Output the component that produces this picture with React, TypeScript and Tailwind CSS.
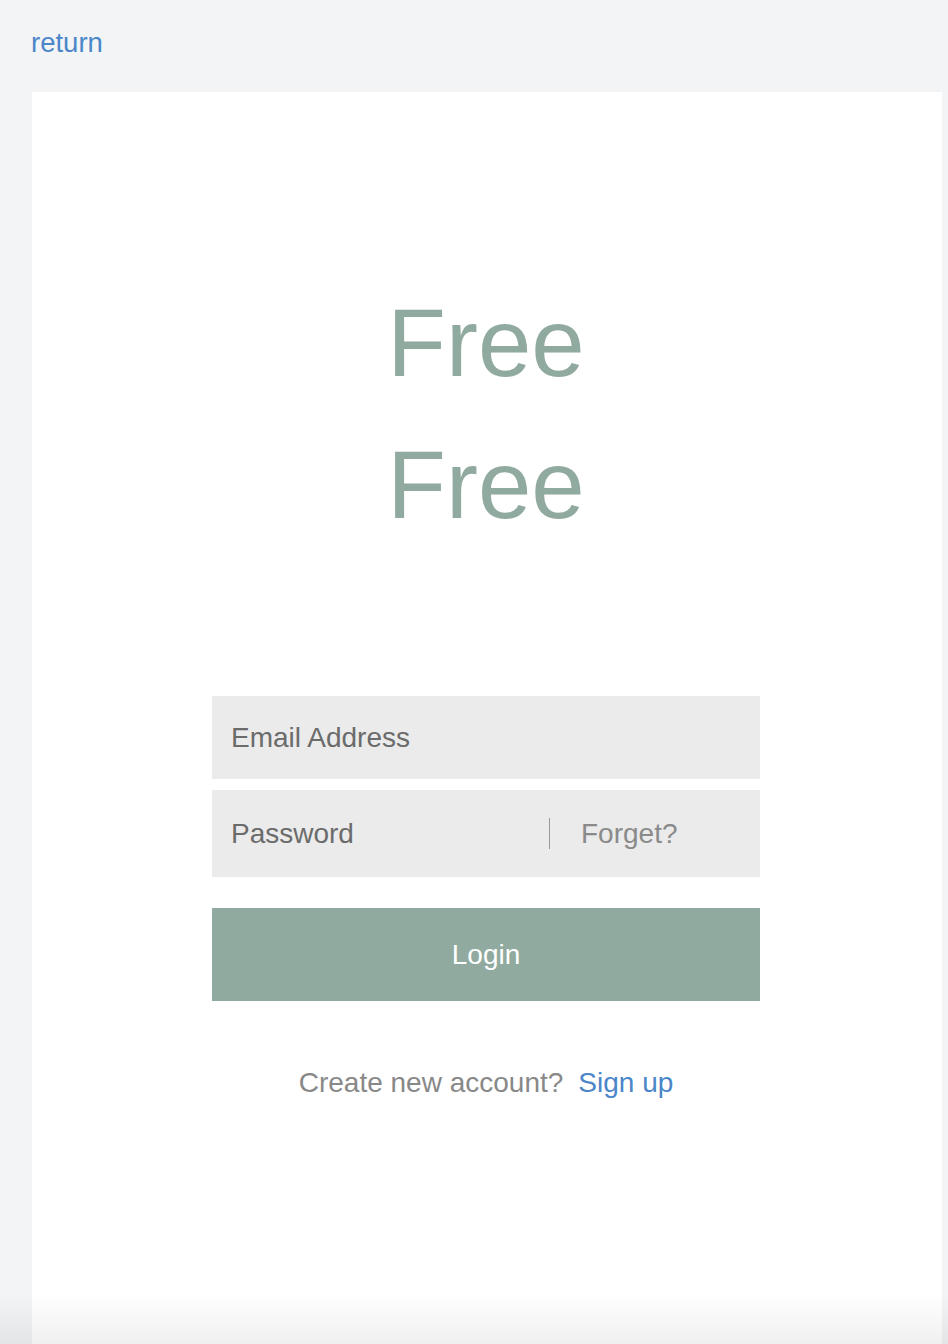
export default function App() {
  return (
    <div className="min-h-screen bg-[#f3f4f6] font-['Liberation_Sans',Arial,sans-serif] overflow-hidden">
      {/* Top bar */}
      <div className="h-[92px] pl-[31px] pt-[28px]">
        <a href="#" className="text-[27.5px] leading-[30px] text-[#4a86c8]">
          return
        </a>
      </div>

      {/* Card */}
      <div className="ml-[32px] mr-[6px] bg-white min-h-[1300px] pt-[180px] pr-[2px]">
        <h1 className="text-center text-[96px] leading-[142px] text-[#90aa9f] font-normal">
          Free
          <br />
          Free
        </h1>

        <form className="w-[548px] mx-auto mt-[140px] flex flex-col">
          <div className="h-[83px] bg-[#ebebeb] flex items-center pl-[19px]">
            <input
              type="email"
              placeholder="Email Address"
              className="w-full bg-transparent outline-none text-[28px] text-[#6b6b6b] placeholder:text-[#6b6b6b]"
            />
          </div>
          <div className="h-[87px] mt-[11px] bg-[#ebebeb] flex items-center">
            <input
              type="password"
              placeholder="Password"
              className="flex-1 min-w-0 pl-[19px] bg-transparent outline-none text-[28px] text-[#6b6b6b] placeholder:text-[#6b6b6b]"
            />
            <div className="w-px h-[31px] bg-[#9a9a9a]" />
            <a href="#" className="w-[210px] pl-[31px] text-[28px] text-[#8a8a8a]">
              Forget?
            </a>
          </div>
          <button
            type="button"
            className="h-[93px] mt-[31px] bg-[#90aa9f] text-white text-[28px]"
          >
            Login
          </button>
        </form>

        <p className="mt-[66px] text-center text-[28px] leading-[32px] text-[#888]">
          Create new account?
          <a href="#" className="ml-[15px] text-[#4a86c8]">
            Sign up
          </a>
        </p>
      </div>

      {/* Bottom fade */}
      <div className="fixed left-0 right-0 bottom-0 h-[50px] pointer-events-none bg-gradient-to-b from-transparent to-[#000]/[0.06]" />
    </div>
  )
}
